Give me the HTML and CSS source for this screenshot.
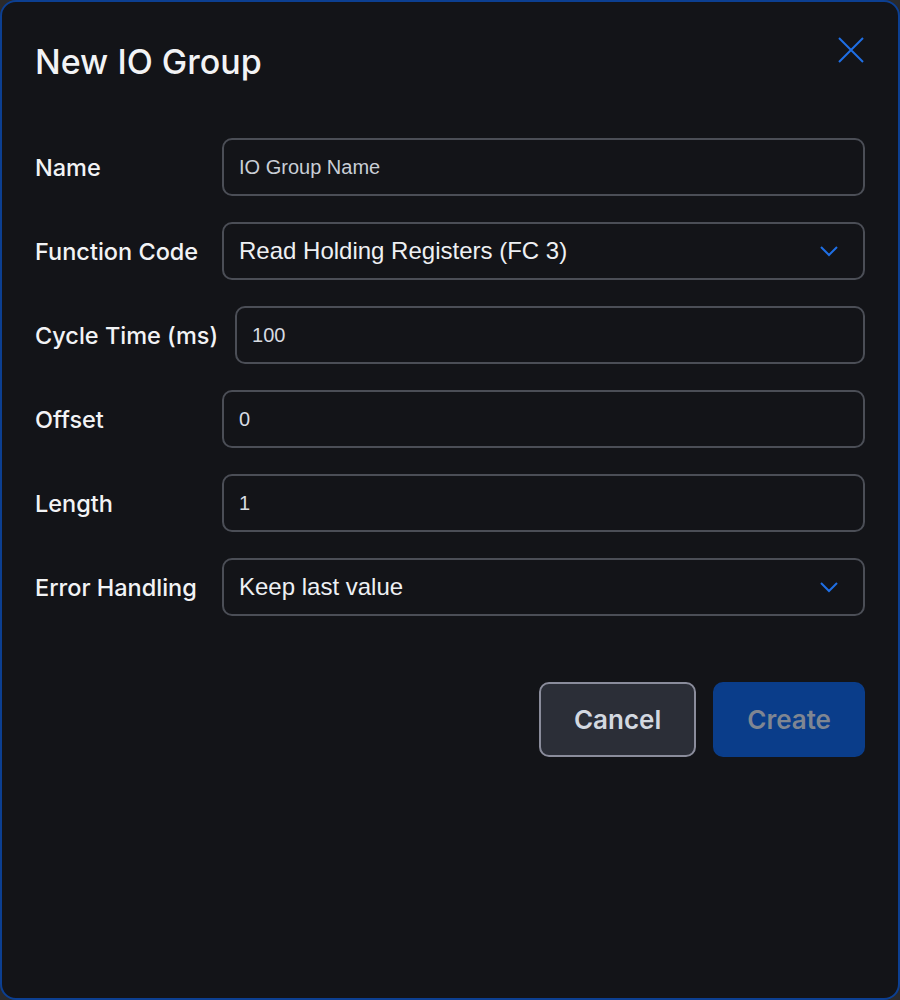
FILE: index.html
```html
<!DOCTYPE html>
<html lang="en">
  <head>
    <meta charset="UTF-8" />
    <meta name="viewport" content="width=device-width, initial-scale=1.0" />
    <title>New IO Group</title>
    <link rel="stylesheet" href="styles.css">
  </head>
  <body>
    <div class="dialog">
      <div class="dialog-header">
        <h2>New IO Group</h2>
        <button class="close-btn" aria-label="Close">
          <svg width="26" height="26" viewBox="0 0 26 26">
            <path d="M1 1 L25 25 M25 1 L1 25" stroke="#1f6fe5" stroke-width="2" fill="none" />
          </svg>
        </button>
      </div>

      <div class="form-row">
        <label for="name">Name</label>
        <input type="text" id="name" placeholder="IO Group Name" />
      </div>
      <div class="form-row">
        <label for="fc">Function Code</label>
        <div class="select">
          <span>Read Holding Registers (FC 3)</span>
          <svg width="20" height="12" viewBox="0 0 20 12">
            <path d="M2 2 L10 10 L18 2" stroke="#1f6fe5" stroke-width="2" fill="none" />
          </svg>
        </div>
      </div>
      <div class="form-row">
        <label for="cycle">Cycle Time (ms)</label>
        <input type="number" id="cycle" value="100" />
      </div>
      <div class="form-row">
        <label for="offset">Offset</label>
        <input type="number" id="offset" value="0" />
      </div>
      <div class="form-row">
        <label for="length">Length</label>
        <input type="number" id="length" value="1" />
      </div>
      <div class="form-row">
        <label for="err">Error Handling</label>
        <div class="select">
          <span>Keep last value</span>
          <svg width="20" height="12" viewBox="0 0 20 12">
            <path d="M2 2 L10 10 L18 2" stroke="#1f6fe5" stroke-width="2" fill="none" />
          </svg>
        </div>
      </div>

      <div class="actions">
        <button class="btn btn-cancel">Cancel</button>
        <button class="btn btn-create" disabled>Create</button>
      </div>
    </div>
  </body>
</html>
```

FILE: styles.css
```css
body {
  margin: 0;
  background-color: #2a2a2c;
  font-family: Inter, "Noto Sans", sans-serif;
}
.dialog {
  box-sizing: border-box;
  width: 900px;
  height: 1000px;
  padding: 24px 33px;
  background-color: #131418;
  border: 2px solid #0c3f91;
  border-radius: 16px;
  color: #f2f3f5;
}
.dialog-header {
  display: flex;
  justify-content: space-between;
  align-items: flex-start;
  margin-bottom: 54px;
}
.dialog-header h2 {
  margin: 14px 0 0 0;
  font-size: 34px;
  font-weight: 500;
  line-height: 44px;
}
.close-btn {
  background: none;
  border: none;
  padding: 0;
  margin: 11px 1px 0 0;
  cursor: pointer;
}
.form-row {
  display: flex;
  align-items: center;
  gap: 17px;
  margin-bottom: 26px;
}
.form-row label {
  min-width: 170px;
  font-size: 23.5px;
  font-weight: 500;
  color: #f2f3f5;
}
.form-row input,
.select {
  flex: 1;
  box-sizing: border-box;
  height: 58px;
  padding: 0 15px;
  background-color: #131418;
  border: 2px solid #4b4e56;
  border-radius: 10px;
  color: #d7dbe2;
  font-family: "Liberation Sans", Arial, sans-serif;
  font-size: 20px;
  outline: none;
}
.form-row input::placeholder {
  color: #c9ced6;
}
.select {
  display: flex;
  align-items: center;
  justify-content: space-between;
  padding-right: 24px;
  font-size: 24px;
  color: #eef0f3;
}
.actions {
  display: flex;
  justify-content: flex-end;
  gap: 17px;
  margin-top: 66px;
}
.btn {
  height: 75px;
  padding: 0 32px;
  border-radius: 10px;
  font-family: Inter, "Noto Sans", sans-serif;
  font-size: 26px;
  font-weight: 600;
}
.btn-cancel {
  padding: 0 33px;
  background-color: #2b2e37;
  border: 2px solid #8a8c9b;
  color: #d3d8e0;
  cursor: pointer;
}
.btn-create {
  background-color: #0a3d8a;
  border: 2px solid #0a3d8a;
  color: #7f8692;
}
```
